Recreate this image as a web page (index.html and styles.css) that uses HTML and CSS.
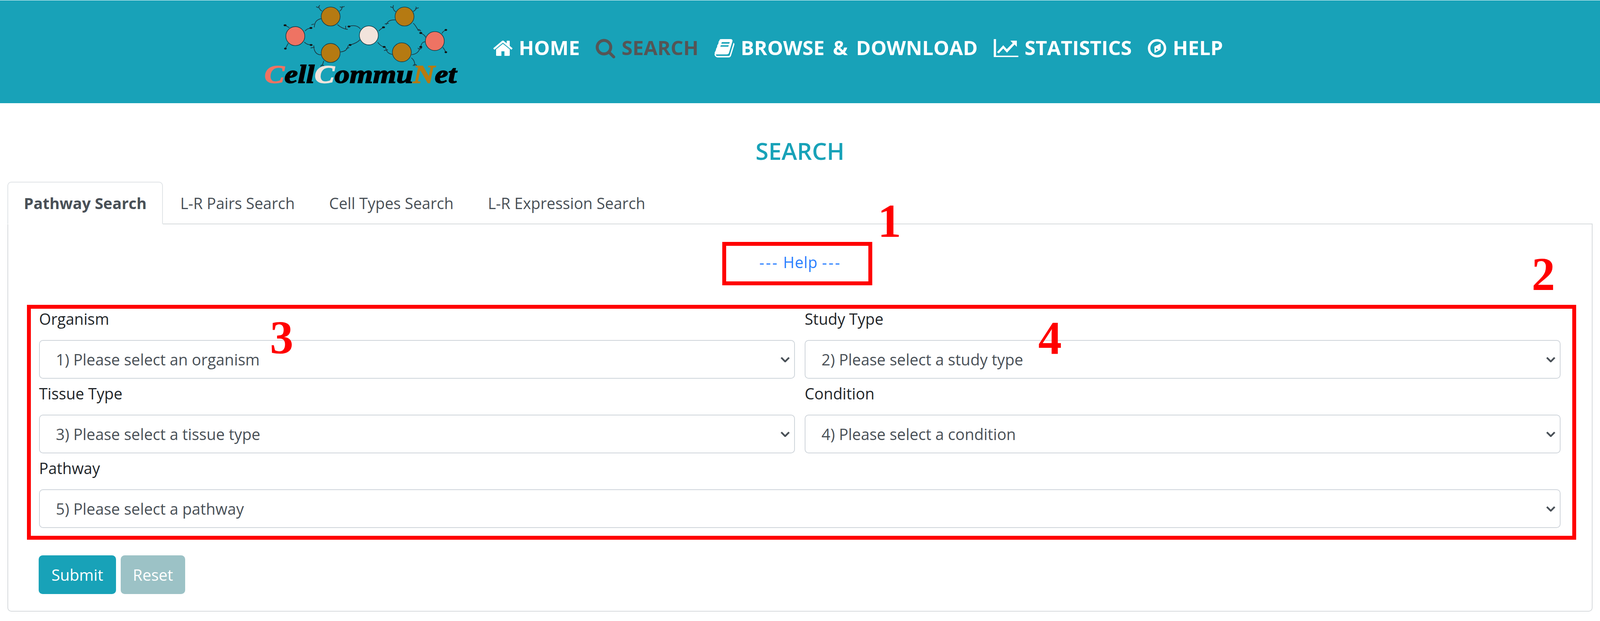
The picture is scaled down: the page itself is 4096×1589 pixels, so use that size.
FILE: index.html
```html
<!DOCTYPE html>
<html lang="en">
<head>
<meta charset="utf-8">
<title>CellCommuNet - Search</title>
<link rel="stylesheet" href="styles.css">
</head>
<body>
<header class="topbar">
  <svg class="logo" viewBox="0 0 540 264" width="540" height="264" aria-label="CellCommuNet">
    <g transform="translate(-6.4 0) scale(.404 .264)">
      <g class="links">
        <path d="M265 268L238 245M258 420L240 470M365 300C375 280 385 275 400 272M360 408C370 425 385 435 403 435"/>
        <path d="M472 108C460 100 455 85 450 60M450 75L435 65M450 70L458 50M583 108C595 100 600 85 600 60M600 75L585 65M600 70L615 62"/>
        <path d="M468 180C430 190 425 230 423 265M405 240L423 232M570 238C585 260 610 280 635 285M622 250V285"/>
        <path d="M715 280C700 250 670 240 643 257M832 300C840 285 850 275 862 265M712 385C700 410 675 425 650 436M825 410C835 430 850 450 865 455"/>
        <path d="M588 503C620 500 635 480 638 440M625 470L645 462M468 532C430 530 420 490 420 440M400 465L425 458M483 590C480 610 475 625 472 640M464 645C464 625 484 625 484 645"/>
        <path d="M940 115C925 100 922 85 922 60M922 75L905 65M922 70L925 50M1050 112C1062 100 1070 90 1072 75M1062 85L1085 75M1072 80L1066 65"/>
        <path d="M937 193C900 190 885 210 880 240M870 232L895 225M1050 225C1070 250 1075 290 1090 300M1078 295C1080 280 1095 285 1098 305"/>
        <path d="M918 527C885 520 880 490 875 460M865 490L890 482M1040 530C1075 525 1090 490 1095 455M1080 465C1085 480 1100 480 1105 460M1038 560C1055 580 1060 600 1060 640M1050 640C1050 620 1072 620 1072 640"/>
        <path d="M1130 365C1125 340 1110 330 1098 320M1128 405C1105 405 1100 430 1098 455M1232 325C1235 310 1245 300 1257 290M1238 458C1245 475 1252 490 1257 505"/>
      </g>
      <g class="dots">
        <ellipse cx="238" cy="245" rx="9" ry="9"/><ellipse cx="240" cy="471" rx="8" ry="9"/><ellipse cx="402" cy="271" rx="9" ry="9"/><ellipse cx="403" cy="436" rx="9" ry="9"/>
        <ellipse cx="643" cy="257" rx="9" ry="9"/><ellipse cx="862" cy="265" rx="9" ry="9"/><ellipse cx="650" cy="436" rx="9" ry="9"/><ellipse cx="866" cy="455" rx="9" ry="9"/>
        <ellipse cx="1098" cy="320" rx="9" ry="9"/><ellipse cx="1098" cy="455" rx="9" ry="9"/><ellipse cx="1257" cy="290" rx="8" ry="9"/><ellipse cx="1257" cy="506" rx="8" ry="9"/>
      </g>
      <ellipse class="cell salmon" cx="303" cy="350" rx="60" ry="92"/>
      <ellipse class="cell brown" cx="527" cy="160" rx="60" ry="92"/>
      <ellipse class="cell brown" cx="527" cy="513" rx="60" ry="92"/>
      <ellipse class="cell cream" cx="769" cy="343" rx="60" ry="92"/>
      <ellipse class="cell brown" cx="995" cy="160" rx="60" ry="92"/>
      <ellipse class="cell brown" cx="978" cy="507" rx="60" ry="92"/>
      <ellipse class="cell salmon" cx="1187" cy="398" rx="60" ry="92"/>
    </g>
    <text class="wordmark" transform="translate(37 212) scale(1.166 1)"><tspan class="t-salmon">C</tspan>ell<tspan class="t-cream">C</tspan>ommu<tspan class="t-brown">N</tspan>et</text>
  </svg>
  <nav class="mainnav">
    <a class="navitem">
      <svg class="ic ic-home" viewBox="97 218 1600 1318"><path d="M1472 992v480q0 26-19 45t-45 19h-384v-384h-256v384h-384q-26 0-45-19t-19-45v-480q0-1 .5-3t.5-3l575-474 575 474q1 2 1 6zm223-69l-62 74q-8 9-21 11h-3q-13 0-21-7l-692-577-692 577q-12 8-24 7-13-2-21-11l-62-74q-8-10-7-23.5t11-21.5l719-599q32-26 76-26t76 26l244 204v-195q0-14 9-23t23-9h192q14 0 23 9t9 23v408l219 182q10 8 11 21.5t-7 23.5z"/></svg>
      <span>HOME</span>
    </a>
    <a class="navitem current">
      <svg class="ic ic-search" viewBox="64 128 1664 1664"><path d="M1216 832q0-185-131.5-316.5t-316.5-131.5-316.5 131.5-131.5 316.5 131.5 316.5 316.5 131.5 316.5-131.5 131.5-316.5zm512 832q0 52-38 90t-90 38q-54 0-90-38l-343-342q-179 124-399 124-143 0-273.5-55.5t-225-150-150-225-55.5-273.5 55.5-273.5 150-225 225-150 273.5-55.5 273.5 55.5 225 150 150 225 55.5 273.5q0 220-124 399l343 343q37 37 37 90z"/></svg>
      <span>SEARCH</span>
    </a>
    <a class="navitem">
      <svg class="ic ic-book" viewBox="56 128 1670 1536"><path d="M1703 478q40 57 18 129l-275 906q-19 64-76.500 107.500t-122.500 43.500h-923q-77 0-148.500-53.500t-99.500-131.500q-24-67-2-127 0-4 3-27t4-37q1-8-3-21.500t-3-19.500q2-11 8-21t16.500-23.500 16.500-23.500q23-38 45-91.500t30-91.500q3-10 .5-30t-.5-28q3-11 17-28t17-23q21-36 42-92t25-90q1-9-2.500-32t.5-28q4-13 22-30.500t22-22.500q19-26 42.500-84.500t27.500-96.500q1-8-3-25.500t-2-26.500q2-8 9-18t18-23 17-21q8-12 16.500-30.500t15-35 16-36 19.500-32 26.500-23.500 36-11.500 47.500 5.500l-1 3q38-9 51-9h761q74 0 114 56t18 130l-274 906q-36 119-71.500 153.500t-128.500 34.500h-869q-27 0-38 15-11 16-1 43 24 70 144 70h923q29 0 56-15.500t35-41.500l300-987q7-22 5-57 38 15 59 43zm-1064 2q-4 13 2 22.500t20 9.500h608q13 0 25.500-9.500t16.500-22.500l21-64q4-13-2-22.500t-20-9.500h-608q-13 0-25.500 9.500t-16.500 22.500zm-83 256q-4 13 2 22.500t20 9.500h608q13 0 25.500-9.500t16.500-22.500l21-64q4-13-2-22.500t-20-9.500h-608q-13 0-25.500 9.500t-16.500 22.500z"/></svg>
      <span>BROWSE &amp; DOWNLOAD</span>
    </a>
    <a class="navitem">
      <svg class="ic ic-chart" viewBox="90 75 240 175"><path d="M90 75h22v162h218v13H90z"/><path d="M121 203l62-68 34 38 58-58-23-25h63v60l-22-22-74 79-36-40-44 47z"/></svg>
      <span>STATISTICS</span>
    </a>
    <a class="navitem">
      <svg class="ic ic-compass" viewBox="140 72 180 178"><circle class="ring" cx="230" cy="161" r="77"/><path fill-rule="evenodd" d="M205 145l60-30v60l-60 32zM220 160v24l22-12z"/></svg>
      <span>HELP</span>
    </a>
  </nav>
</header>

<main class="page">
  <h1 class="pagetitle">SEARCH</h1>
  <ul class="tabs">
    <li class="tab active">Pathway Search</li>
    <li class="tab">L-R Pairs Search</li>
    <li class="tab">Cell Types Search</li>
    <li class="tab">L-R Expression Search</li>
  </ul>
  <section class="pane">
    <p class="helpline"><a class="helplink"><span class="dashes">---</span> Help <span class="dashes">---</span></a></p>
    <form class="filters">
      <div class="field">
        <label class="fieldlabel">Organism</label>
        <select class="picker"><option>1) Please select an organism</option></select>
      </div>
      <div class="field">
        <label class="fieldlabel">Study Type</label>
        <select class="picker"><option>2) Please select a study type</option></select>
      </div>
      <div class="field">
        <label class="fieldlabel">Tissue Type</label>
        <select class="picker"><option>3) Please select a tissue type</option></select>
      </div>
      <div class="field">
        <label class="fieldlabel">Condition</label>
        <select class="picker"><option>4) Please select a condition</option></select>
      </div>
      <div class="field wide">
        <label class="fieldlabel">Pathway</label>
        <select class="picker"><option>5) Please select a pathway</option></select>
      </div>
    </form>
    <div class="actions">
      <button class="btn submit" type="button">Submit</button>
      <button class="btn reset" type="button">Reset</button>
    </div>
  </section>
</main>

<div class="helpmark"></div>
<span class="callout c1">1</span>
<span class="callout c2">2</span>
<span class="callout c3">3</span>
<span class="callout c4">4</span>
</body>
</html>
```
FILE: styles.css
```css
* { box-sizing: border-box; }
html, body { margin: 0; padding: 0; }
body {
  width: 4096px;
  height: 1589px;
  overflow: hidden;
  position: relative;
  background: #fff;
  color: #212529;
  font-family: "Open Sans", "Liberation Sans", sans-serif;
  font-size: 39.4px;
  line-height: 62px;
}

/* top bar */
.topbar {
  display: flex;
  align-items: flex-start;
  height: 263px;
  margin-top: 1px;
  padding-left: 640px;
  background: #18a2b8;
  overflow: hidden;
}
.logo { flex: none; margin-top: -1px; }
.links path { fill: none; stroke: #1d3a44; stroke-width: 1.8px; vector-effect: non-scaling-stroke; }
.dots ellipse { fill: #111; }
.cell { stroke: #183f48; stroke-width: 1.6px; vector-effect: non-scaling-stroke; }
.salmon { fill: #ee7363; }
.brown { fill: #b57a12; }
.cream { fill: #f2e4dc; }
.wordmark {
  font-family: "Liberation Serif", serif;
  font-style: italic;
  font-weight: 700;
  font-size: 66px;
  fill: #000;
  stroke: #000;
  stroke-width: 2px;
}
.t-salmon { fill: #ee7363; stroke: #ee7363; }
.t-cream { fill: #f2e4dc; stroke: #f2e4dc; }
.t-brown { fill: #b57a12; stroke: #b57a12; }

.mainnav {
  display: flex;
  align-items: center;
  gap: 41px;
  height: 244px;
  margin-left: 83px;
  font-size: 51px;
  font-weight: 700;
  word-spacing: 8px;
  color: #fff;
}
.navitem { display: flex; align-items: center; gap: 16px; white-space: nowrap; }
.navitem span { margin-bottom: 4px; }
.navitem.current { color: #555; }
.ic { display: block; fill: currentColor; flex: none; }
.ic-home { width: 49px; height: 40px; }
.ic-search { width: 50px; height: 51px; margin-top: 2px; }
.ic-book { width: 51px; height: 47px; }
.ic-chart { width: 63px; height: 46px; }
.ic-compass { width: 48px; height: 47px; }
.ring { fill: none; stroke: currentColor; stroke-width: 24; }

/* page */
.page { margin: 0 19px; }
.pagetitle {
  display: flex;
  align-items: center;
  justify-content: center;
  height: 201px;
  margin: 0;
  padding-top: 42px;
  color: #18a2b8;
  font-size: 60px;
  font-weight: 600;
  line-height: 62px;
}
.tabs {
  display: flex;
  height: 109px;
  margin: 0;
  padding: 0;
  list-style: none;
  border-bottom: 2px solid #d6dadd;
}
.tab {
  height: 109px;
  padding: 22px 42px 0;
  border: 2px solid transparent;
  border-radius: 10px 10px 0 0;
  color: #495057;
  white-space: nowrap;
}
.tab.active {
  padding: 22px 40px 0;
  border-color: #dfe3e6 #dfe3e6 #fff;
  background: #fff;
  font-weight: 700;
}

.pane {
  padding: 66px 40px 43px 48px;
  border: 2px solid #d6dadd;
  border-top: 0;
  border-radius: 0 0 10px 10px;
}
.helpline { margin: 0 0 78px; padding-right: 6px; text-align: center; }
.helplink { color: #2a7fff; letter-spacing: .8px; }
.dashes { letter-spacing: 4px; }

.filters {
  display: grid;
  grid-template-columns: 1fr 1fr;
  column-gap: 25px;
  row-gap: 12px;
  padding: 0 30px 20px 21px;
  border: 10px solid #f00;
}
.field.wide { grid-column: 1 / -1; }
.fieldlabel { display: block; height: 56px; margin-bottom: 24px; line-height: 52px; }
.picker {
  display: block;
  width: 100%;
  height: 99px;
  padding: 0 60px 0 41px;
  border: 2px solid #ced4da;
  border-radius: 10px;
  appearance: none;
  -webkit-appearance: none;
  background: #fff url("data:image/svg+xml,%3Csvg xmlns='http://www.w3.org/2000/svg' viewBox='0 0 24 14'%3E%3Cpath fill='none' stroke='%23495057' stroke-width='4.5' d='M2 2l10 10L22 2'/%3E%3C/svg%3E") no-repeat right 11px center / 24px 14px;
  color: #495057;
  font-family: inherit;
  font-size: 39.7px;
}

.actions { display: flex; gap: 12px; margin: 40px 0 0 30px; }
.btn {
  height: 99px;
  border: 0;
  border-radius: 10px;
  color: #fff;
  font: inherit;
  font-size: 40px;
}
.submit { width: 198px; background: #18a2b8; }
.reset { width: 165px; background: #9cc2c6; }

/* annotation marks laid over the screenshot */
.helpmark {
  position: absolute;
  left: 1849px;
  top: 619px;
  width: 384px;
  height: 111px;
  border: 10px solid #f00;
}
.callout {
  position: absolute;
  color: #f00;
  font-family: "Liberation Serif", serif;
  font-size: 120px;
  font-weight: 700;
  line-height: 1;
}
.c1 { left: 2247px; top: 506px; }
.c2 { left: 3921px; top: 642px; }
.c3 { left: 691px; top: 804px; }
.c4 { left: 2658px; top: 806px; }
```
